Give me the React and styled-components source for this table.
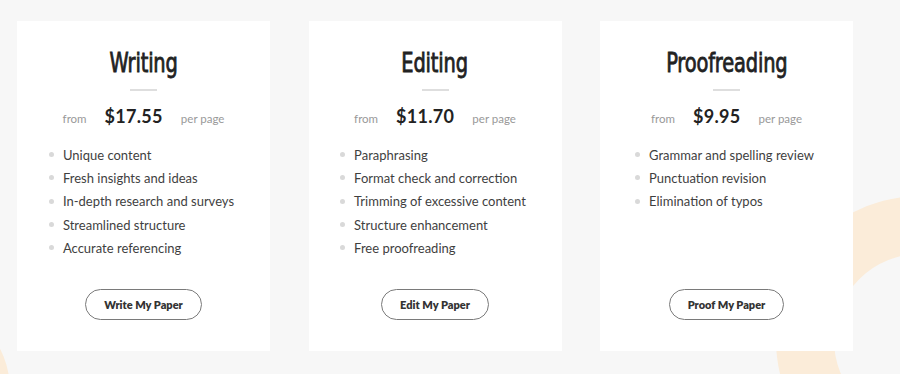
import React from "react";
import styled, { createGlobalStyle } from "styled-components";

const Global = createGlobalStyle`
  html, body { margin: 0; padding: 0; background: #f7f7f7; }
  * { box-sizing: border-box; }
`;

const Page = styled.div`
  position: relative;
  width: 900px;
  height: 374px;
  overflow: hidden;
  background: #f7f7f7;
`;

const Ring = styled.div`
  position: absolute;
  left: ${(p) => p.$left}px;
  top: ${(p) => p.$top}px;
  width: ${(p) => p.$size}px;
  height: ${(p) => p.$size}px;
  border-radius: 50%;
  border: ${(p) => p.$thick}px solid #fbecd9;
  z-index: 0;
`;

const Row = styled.div`
  position: relative;
  z-index: 1;
  display: grid;
  grid-template-columns: repeat(3, 253px);
  column-gap: 38.5px;
  padding: 21px 0 0 17px;
`;

const Card = styled.section`
  background: #fff;
  height: 330px;
  display: flex;
  flex-direction: column;
  align-items: center;
  padding: 24px 0 31px;
`;

const Title = styled.h2`
  margin: 0;
  font-family: "Liberation Sans Narrow", "DejaVu Sans Condensed", sans-serif;
  font-weight: 400;
  font-size: 27px;
  line-height: 36px;
  color: #222;
  letter-spacing: -0.2px;
  -webkit-text-stroke: 0.8px #222;
  transform: scaleX(0.8);
`;

const Divider = styled.div`
  width: 27px;
  height: 2px;
  background: #dedede;
  margin-top: 8px;
`;

const PriceRow = styled.div`
  display: flex;
  align-items: baseline;
  gap: 18px;
  margin-top: 14px;
  font-family: "Lato", "Open Sans", sans-serif;
`;

const Small = styled.span`
  font-size: 11.5px;
  color: #999;
`;

const Price = styled.span`
  font-size: 18px;
  font-weight: 700;
  color: #222;
  letter-spacing: 0.3px;
`;

const List = styled.ul`
  list-style: none;
  margin: 16px 0 0;
  padding: 0 4px 0 0;
  display: flex;
  flex-direction: column;
  flex: 1;
  align-self: center;
`;

const Item = styled.li`
  display: flex;
  align-items: center;
  gap: 9px;
  height: 23.3px;
  font-family: "Lato", "Open Sans", sans-serif;
  font-size: 13px;
  color: #3f3f3f;
  &::before {
    content: "";
    width: 5px;
    height: 5px;
    border-radius: 50%;
    background: #d9d9d9;
    flex: none;
  }
`;

const Button = styled.button`
  height: 31px;
  padding: 0 18px;
  border: 1px solid #7a7a7a;
  border-radius: 16px;
  background: #fff;
  font-family: "Lato", "Open Sans", sans-serif;
  font-weight: 800;
  font-size: 11px;
  color: #333;
  cursor: pointer;
`;

const plans = [
  {
    title: "Writing",
    price: "$17.55",
    items: [
      "Unique content",
      "Fresh insights and ideas",
      "In-depth research and surveys",
      "Streamlined structure",
      "Accurate referencing",
    ],
    cta: "Write My Paper",
  },
  {
    title: "Editing",
    price: "$11.70",
    items: [
      "Paraphrasing",
      "Format check and correction",
      "Trimming of excessive content",
      "Structure enhancement",
      "Free proofreading",
    ],
    cta: "Edit My Paper",
  },
  {
    title: "Proofreading",
    price: "$9.95",
    items: ["Grammar and spelling review", "Punctuation revision", "Elimination of typos"],
    cta: "Proof My Paper",
  },
];

export default function App() {
  return (
    <Page>
      <Global />
      <Ring $left={776} $top={196} $size={288} $thick={58} />
      <Ring $left={-170} $top={300} $size={180} $thick={40} />
      <Row>
        {plans.map((p) => (
          <Card key={p.title}>
            <Title>{p.title}</Title>
            <Divider />
            <PriceRow>
              <Small>from</Small>
              <Price>{p.price}</Price>
              <Small>per page</Small>
            </PriceRow>
            <List>
              {p.items.map((it) => (
                <Item key={it}>{it}</Item>
              ))}
            </List>
            <Button>{p.cta}</Button>
          </Card>
        ))}
      </Row>
    </Page>
  );
}
